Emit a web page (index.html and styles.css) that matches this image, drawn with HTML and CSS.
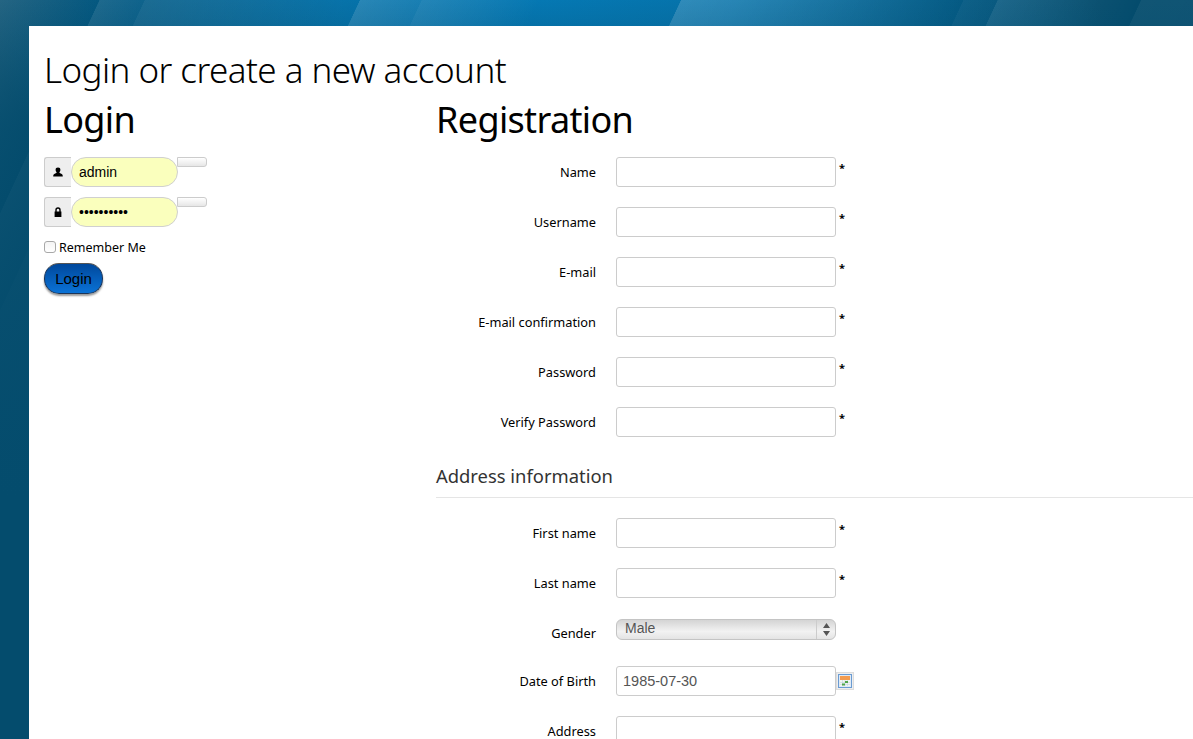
FILE: index.html
```html
<!DOCTYPE html>
<html lang="en">
<head>
<meta charset="utf-8">
<title>Login or create a new account</title>
<link rel="stylesheet" href="styles.css">
</head>
<body>
<main class="page">
  <h1 class="page-title">Login or create a new account</h1>
  <div class="columns">
    <section class="login">
      <h2 class="section-title">Login</h2>
      <div class="login-row">
        <span class="addon"><svg class="addon-icon" viewBox="0 0 10 10"><path d="M5 .5C3.400.5 2.600 1.400 2.600 2.800c0 1 .5 1.900 1 2.400 0 .6-.5 1-1.400 1.300C.8 7.100.2 7.700.2 9.500h9.600c0-1.800-.6-2.400-2-3-.9-.3-1.400-.7-1.400-1.300.5-.5 1-1.400 1-2.400C7.400 1.400 6.600.5 5 .5z"/></svg></span>
        <input class="login-input" type="text" value="admin">
        <span class="stub"></span>
      </div>
      <div class="login-row">
        <span class="addon"><svg class="addon-icon" viewBox="0 0 10 10"><path d="M2.300 4.500V3a2.700 2.700 0 0 1 5.400 0v1.500h.7V10H1.600V4.500zm1.400 0h2.600V3a1.300 1.300 0 0 0-2.600 0z"/></svg></span>
        <input class="login-input" type="password" value="1234567890">
        <span class="stub"></span>
      </div>
      <label class="remember"><input class="remember-box" type="checkbox">Remember Me</label>
      <button class="login-btn" type="button">Login</button>
    </section>
    <section class="register">
      <h2 class="section-title">Registration</h2>
      <div class="form-row"><label class="form-label">Name</label><input class="field" type="text"><span class="req">*</span></div>
      <div class="form-row"><label class="form-label">Username</label><input class="field" type="text"><span class="req">*</span></div>
      <div class="form-row"><label class="form-label">E-mail</label><input class="field" type="text"><span class="req">*</span></div>
      <div class="form-row"><label class="form-label">E-mail confirmation</label><input class="field" type="text"><span class="req">*</span></div>
      <div class="form-row"><label class="form-label">Password</label><input class="field" type="password"><span class="req">*</span></div>
      <div class="form-row"><label class="form-label">Verify Password</label><input class="field" type="password"><span class="req">*</span></div>
      <h3 class="subsection">Address information</h3>
      <div class="form-row"><label class="form-label">First name</label><input class="field" type="text"><span class="req">*</span></div>
      <div class="form-row"><label class="form-label">Last name</label><input class="field" type="text"><span class="req">*</span></div>
      <div class="form-row select-row"><label class="form-label">Gender</label>
        <div class="select"><span class="select-value">Male</span><span class="select-arrows"><svg class="arrows-icon" viewBox="0 0 7 13"><path d="M3.500 0L7 5H0zM3.500 13L0 8h7z"/></svg></span></div>
      </div>
      <div class="form-row date-row"><label class="form-label">Date of Birth</label><input class="field" type="text" value="1985-07-30">
        <span class="cal"><svg class="cal-icon" viewBox="0 0 14 14"><rect x=".5" y=".5" width="13" height="13" fill="#dfeaf6" stroke="#6a9bd2"/><rect x="2" y="2" width="10" height="4" fill="#f39c50"/><rect x="2" y="6" width="10" height="6" fill="#f2f6ee"/><path d="M2 8.500h10M2 10.500h10M4.500 6v6M7 6v6M9.500 6v6" stroke="#c3d4e6" stroke-width=".6"/><rect x="7" y="7" width="3" height="2" fill="#4ea64a"/><rect x="4" y="9.500" width="3" height="2" fill="#4ea64a"/></svg></span>
      </div>
      <div class="form-row"><label class="form-label">Address</label><input class="field" type="text"><span class="req">*</span></div>
    </section>
  </div>
</main>
</body>
</html>
```
FILE: styles.css
```css
* { box-sizing: border-box; }
html, body { height: 739px; overflow: hidden; }
body {
  margin: 0;
  padding: 26px 0 0 29px;
  font-family: "Noto Sans", "Open Sans", sans-serif;
  color: #000;
  background-color: #044c6d;
  background-image:
    linear-gradient(180deg, rgba(4,76,109,0) 0, rgba(4,76,109,.15) 26px, rgba(4,76,109,.7) 130px, rgba(4,76,109,.88) 330px, #044c6d 500px),
    linear-gradient(115deg,
      rgba(255,255,255,.13) 0, rgba(255,255,255,0) 90px,
      rgba(255,255,255,.10) 90.500px, rgba(255,255,255,.04) 131px,
      rgba(255,255,255,.09) 131.500px, rgba(255,255,255,0) 326px,
      rgba(255,255,255,.14) 326.500px, rgba(255,255,255,.08) 382px,
      rgba(255,255,255,.12) 382.500px, rgba(255,255,255,0) 490px,
      rgba(255,255,255,0) 617px,
      rgba(255,255,255,.17) 617.500px, rgba(255,255,255,0) 873px,
      rgba(255,255,255,.04) 873.500px, rgba(255,255,255,.02) 904px,
      rgba(255,255,255,.10) 904.500px, rgba(255,255,255,0) 1034px,
      rgba(255,255,255,.05) 1034.500px, rgba(255,255,255,.02) 1393px),
    radial-gradient(ellipse 560px 300px at 540px 0, #0578b3 0, #0672a9 35%, #044c6d 100%);
}
.page {
  background: #fff;
  height: 713px;
  padding: 24px 0 0 15px;
}
.page-title {
  margin: 0;
  height: 40px;
  font-size: 35px;
  line-height: 40px;
  font-weight: 300;
  letter-spacing: -.55px;
}
.columns { display: grid; grid-template-columns: 392px 1fr; }
.section-title {
  margin: 0;
  height: 67px;
  font-size: 36px;
  line-height: 60px;
  font-weight: 400;
  letter-spacing: -.65px;
}
.login-row { display: flex; height: 30px; margin-bottom: 10px; }
.addon {
  display: flex;
  align-items: center;
  justify-content: center;
  width: 27px;
  background: #eee;
  border: 1px solid #ccc;
  border-right: 0;
  border-radius: 3px 0 0 3px;
}
.addon-icon { width: 10px; height: 10px; fill: #000; }
.login-input {
  width: 107px;
  height: 30px;
  padding: 0 7px;
  background: #faffbd;
  border: 1px solid #d0d0d0;
  border-radius: 15px;
  font-family: "Liberation Sans", sans-serif;
  font-size: 14px;
  color: #000;
  outline: 0;
}
.stub {
  width: 30px;
  height: 10px;
  margin-left: -1px;
  background: linear-gradient(#fff, #e6e6e6);
  border: 1px solid #ccc;
  border-radius: 0 3px 3px 0;
}
.remember { display: flex; align-items: center; height: 20px; font-size: 12.500px; }
.remember-box {
  appearance: none;
  width: 12px;
  height: 12px;
  margin: 0 3px 0 0;
  background: linear-gradient(#f4f4f4, #fff);
  border: 1px solid #a8a8a8;
  border-radius: 3px;
}
.login-btn {
  display: block;
  width: 59px;
  height: 31px;
  margin-top: 6px;
  padding: 0;
  background: linear-gradient(#00489c, #0a72d6);
  border: 1px solid #1c3558;
  border-top-color: #555;
  border-radius: 15px;
  box-shadow: 0 2px 2px rgba(0,0,0,.4);
  font-family: "Liberation Sans", sans-serif;
  font-size: 15px;
  color: #000;
}
.form-row { display: flex; align-items: center; height: 30px; margin-bottom: 20px; }
.form-label {
  width: 160px;
  margin-right: 20px;
  text-align: right;
  font-size: 12.800px;
}
.field {
  width: 220px;
  height: 30px;
  padding: 0 6px;
  background: #fff;
  border: 1px solid #ccc;
  border-radius: 3px;
  font-family: "Liberation Sans", sans-serif;
  font-size: 14.500px;
  color: #555;
}
.req { align-self: flex-start; margin: 3px 0 0 3px; font-size: 11px; line-height: 16px; font-weight: 700; }
.subsection {
  margin: 0 0 20px;
  height: 41px;
  border-bottom: 1px solid #e5e5e5;
  font-size: 18.400px;
  line-height: 38px;
  font-weight: 400;
  color: #333;
}
.select-row { margin-bottom: 18px; }
.select {
  display: flex;
  align-items: center;
  width: 220px;
  height: 21px;
  margin-top: -7px;
  background: linear-gradient(#d4d4d4, #f2f2f2 60%, #e4e4e4);
  border: 1px solid #c4c4c4;
  border-radius: 6px;
  font-family: "Liberation Sans", sans-serif;
  font-size: 14px;
  line-height: 17px;
  color: #555;
}
.select-value { flex: 1; padding: 0 0 2px 8px; }
.select-arrows { display: flex; align-items: center; justify-content: center; width: 19px; height: 100%; border-left: 1px solid #ccc; }
.arrows-icon { width: 7px; height: 13px; fill: #555; }
.date-row { margin-bottom: 20px; }
.cal {
  display: flex;
  align-items: center;
  justify-content: center;
  width: 18px;
  height: 18px;
  background: #eee;
  border: 1px solid #ddd;
}
.cal-icon { width: 14px; height: 14px; }
```
